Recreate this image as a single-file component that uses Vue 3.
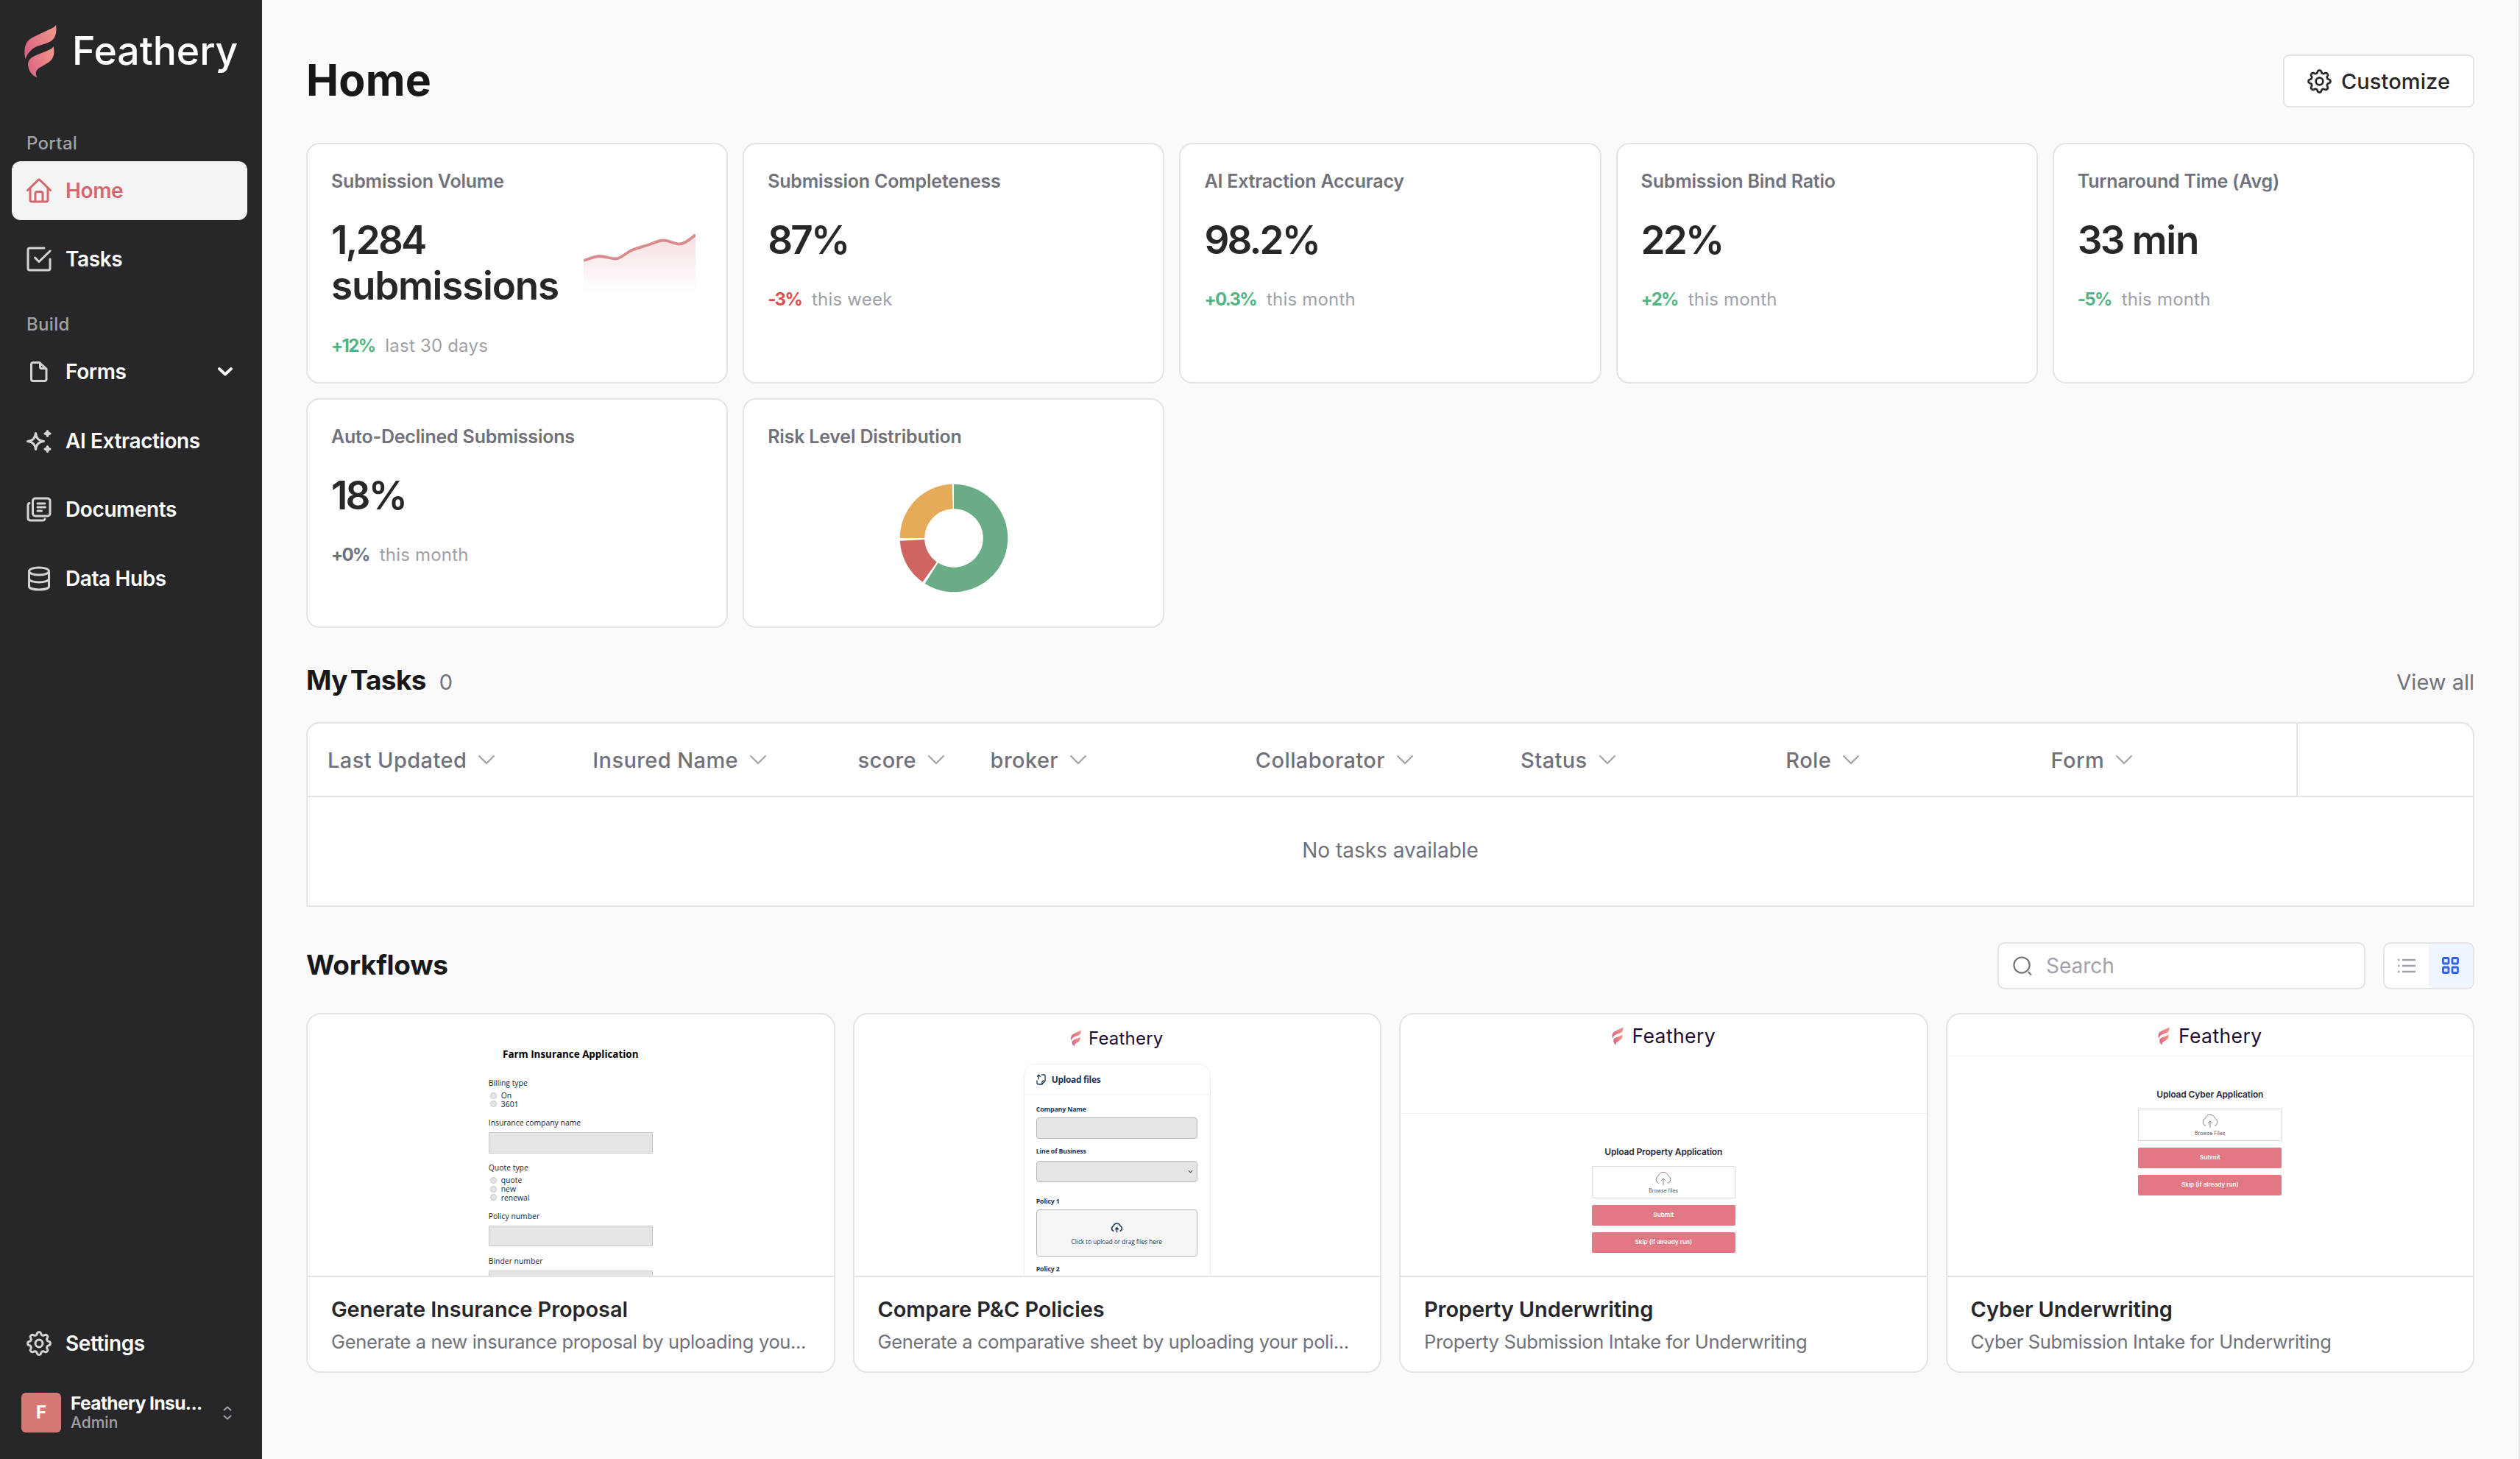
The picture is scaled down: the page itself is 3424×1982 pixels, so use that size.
<template>
  <div class="app">
    <!-- shared icon shapes -->
    <svg class="sprite" width="0" height="0" aria-hidden="true">
      <defs>
        <linearGradient id="feather-grad" x1="0" y1="0.6" x2="1" y2="0.3">
          <stop offset="0" stop-color="#dc6785" />
          <stop offset="1" stop-color="#f0958a" />
        </linearGradient>
        <linearGradient id="spark-grad" x1="0" y1="0" x2="0" y2="1">
          <stop offset="0" stop-color="#d77d7d" stop-opacity="0.24" />
          <stop offset="1" stop-color="#d77d7d" stop-opacity="0" />
        </linearGradient>
      </defs>
      <symbol id="i-feather" viewBox="0 0 44 72">
        <path fill="url(#feather-grad)" d="M43 0C41 3 38 4.5 34 6L14 15.500C6 19 1 24 .5 34C.2 39 .6 43 1.500 46C4 39 9 33 17 29L31 24.500C40 21.500 45 15 43 0Z" />
        <path fill="url(#feather-grad)" d="M39.700 29C38 32 35 33.500 31 35L15 41.500C8 44.500 5 48.500 5 54C6 63 10 68 17.500 71.500C15 66 15 62 20 58.500C23 56.500 27 54.500 30 52.500C39 48 42 41 39.700 29Z" />
      </symbol>
      <symbol id="i-home" viewBox="0 0 34 34">
        <path d="M1.500 16.500 15.600 2.800a2 2 0 0 1 2.800 0L32.500 16.500M5 13.500V29.500A2.500 2.500 0 0 0 7.500 32H26.500A2.500 2.500 0 0 0 29 29.500V13.500M12 32V21A2.500 2.500 0 0 1 14.500 18.500H19.500A2.500 2.500 0 0 1 22 21V32" />
      </symbol>
      <symbol id="i-tasks" viewBox="0 0 34 34">
        <path d="M24 2H4.500A2.500 2.500 0 0 0 2 4.500V29.500A2.500 2.500 0 0 0 4.500 32H29.500A2.500 2.500 0 0 0 32 29.500V17M11.500 15 17 20.500 32 6" />
      </symbol>
      <symbol id="i-file" viewBox="0 0 34 34">
        <path d="M17.500 4.500H9A2.500 2.500 0 0 0 6.500 7V27A2.500 2.500 0 0 0 9 29.500H24.500A2.500 2.500 0 0 0 27 27V13ZM18.500 5V11A1.500 1.500 0 0 0 20 12.500H26.500" />
      </symbol>
      <symbol id="i-sparkle" viewBox="0 0 34 34">
        <path d="M12.500 6.500C13.600 13.500 16 16.500 23.500 17.600C16 18.700 13.600 21.500 12.500 28.500C11.400 21.500 9 18.700 1.500 17.600C9 16.500 11.400 13.500 12.500 6.500Z" />
        <path d="M28.500 3.500Q28.900 6.600 32 7Q28.900 7.400 28.500 10.500Q28.100 7.400 25 7Q28.100 6.600 28.500 3.500ZM28.500 24.500Q28.900 27.600 32 28Q28.900 28.400 28.500 31.500Q28.100 28.400 25 28Q28.100 27.600 28.500 24.500Z" />
      </symbol>
      <symbol id="i-docs" viewBox="0 0 34 34">
        <rect x="8.500" y="2" width="23.500" height="24" rx="3.500" />
        <path d="M4 8.500Q2 9 2 11.500V28.500Q2 32 5.500 32H22Q24.500 32 25 30M15 9H25M15 14H25.500M15 19H20.500" />
      </symbol>
      <symbol id="i-db" viewBox="0 0 34 34">
        <ellipse cx="17" cy="7" rx="13.500" ry="5" />
        <path d="M3.500 7V27.500C3.500 30.300 9.500 32 17 32S30.500 30.300 30.500 27.500V7M3.500 17.500C3.500 20 9.500 22 17 22S30.500 20 30.500 17.500" />
      </symbol>
      <symbol id="i-gear" viewBox="0 0 34 34">
        <path :d="gearPath" />
        <circle cx="17" cy="17" r="5" />
      </symbol>
      <symbol id="i-cloud" viewBox="0 0 24 20">
        <path d="M6 16.500A5.500 5.500 0 0 1 5.500 6.200A6.800 6.800 0 0 1 18.500 6.200A5.500 5.500 0 0 1 18 16.500M12 19V10M8.800 13 12 9.800 15.200 13" />
      </symbol>
    </svg>

    <aside class="sidebar">
      <div class="brand">
        <svg class="brand-mark"><use href="#i-feather" /></svg>
        <span class="brand-name">Feathery</span>
      </div>

      <nav v-for="group in nav" :key="group.label" class="nav-group">
        <p class="nav-label">{{ group.label }}</p>
        <div class="nav-items">
          <a v-for="item in group.items" :key="item.text" class="nav-item" :class="{ active: item.active }">
            <svg class="nav-icon"><use :href="'#i-' + item.icon" /></svg>
            <span>{{ item.text }}</span>
            <svg v-if="item.expandable" class="nav-chevron" viewBox="0 0 20 12"><path d="M2 2 10 9.500 18 2" /></svg>
          </a>
        </div>
      </nav>

      <div class="sidebar-foot">
        <a class="nav-item">
          <svg class="nav-icon"><use href="#i-gear" /></svg>
          <span>Settings</span>
        </a>
        <div class="account">
          <div class="avatar">F</div>
          <div class="account-text">
            <strong>Feathery Insu...</strong>
            <small>Admin</small>
          </div>
          <svg class="account-toggle" viewBox="0 0 12 19"><path d="M1 6 6 1.500 11 6M1 13 6 17.500 11 13" /></svg>
        </div>
      </div>
    </aside>

    <main class="main">
      <header class="page-head">
        <h1>Home</h1>
        <button class="customize">
          <svg class="customize-icon"><use href="#i-gear" /></svg>
          Customize
        </button>
      </header>

      <section class="metrics">
        <article v-for="m in metrics" :key="m.title" class="metric">
          <h3>{{ m.title }}</h3>
          <div class="metric-row">
            <p class="metric-value"><span class="digits">{{ m.value }}</span>{{ m.unit ? ' ' + m.unit : '' }}</p>
            <svg v-if="m.spark" class="spark" viewBox="0 0 152 80">
              <path :d="sparkLine + 'L152 80L0 80Z'" fill="url(#spark-grad)" />
              <path :d="sparkLine" class="spark-line" />
            </svg>
          </div>
          <p class="metric-trend"><b :class="m.tone">{{ m.delta }}</b><span>{{ m.period }}</span></p>
        </article>
        <article class="metric">
          <h3>Risk Level Distribution</h3>
          <svg class="donut" viewBox="-74 -74 148 148">
            <path v-for="s in slices" :key="s.color" :d="slicePath(s)" :fill="s.color" />
          </svg>
        </article>
      </section>

      <div class="section-head tasks-head">
        <h2>My Tasks<span class="count">0</span></h2>
        <a class="view-all">View all</a>
      </div>
      <section class="table">
        <div class="table-head">
          <div v-for="col in columns" :key="col" class="th">
            {{ col }}
            <svg class="th-chevron" viewBox="0 0 24 14"><path d="M1.500 1.500 12 12 22.500 1.500" /></svg>
          </div>
          <div class="th th-last"></div>
        </div>
        <div class="table-empty">No tasks available</div>
      </section>

      <div class="section-head flows-head">
        <h2>Workflows</h2>
        <div class="tools">
          <div class="search">
            <svg viewBox="0 0 28 28"><circle cx="12.500" cy="12.500" r="11" /><path d="M21.500 22 26 26.500" /></svg>
            <span>Search</span>
          </div>
          <div class="view-toggle">
            <div class="view-btn">
              <svg class="list-icon" viewBox="0 0 24 20"><path d="M0 2H2.500M6 2H24M0 10H2.500M6 10H24M0 18H2.500M6 18H24" /></svg>
            </div>
            <div class="view-btn on">
              <svg class="grid-icon" viewBox="0 0 24 24">
                <rect x="1.500" y="1.500" width="7.500" height="7.500" rx="1" /><rect x="14" y="1.500" width="7.500" height="7.500" rx="1" />
                <rect x="1.500" y="14" width="7.500" height="7.500" rx="1" /><rect x="14" y="14" width="7.500" height="7.500" rx="1" />
              </svg>
            </div>
          </div>
        </div>
      </div>

      <section class="flows">
        <article v-for="flow in flows" :key="flow.title" class="flow">
          <div class="preview">
            <div v-if="flow.kind === 'farm'" class="farm">
              <h4>Farm Insurance Application</h4>
              <div v-for="(f, i) in farmFields" :key="f.label" class="farm-field" :class="{ first: i === 0 }">
                <label>{{ f.label }}</label>
                <div v-if="f.options" class="farm-options">
                  <div v-for="o in f.options" :key="o" class="farm-option"><i></i>{{ o }}</div>
                </div>
                <div v-else class="farm-input"></div>
              </div>
            </div>

            <div v-else-if="flow.kind === 'compare'" class="compare">
              <div class="mini-brand small"><svg><use href="#i-feather" /></svg><span>Feathery</span></div>
              <div class="panel">
                <div class="panel-head">
                  <svg viewBox="0 0 14 16"><path d="M7.500 1H11.500Q13 1 13 2.500V10L8.500 15H4Q1 15 1 12.500V9M13 10H10Q8.500 10 8.500 11.500V15M3.500 8V1.500M1 3.800 3.500 1.200 6 3.800" /></svg>
                  <span>Upload files</span>
                </div>
                <div class="panel-body">
                  <label>Company Name</label>
                  <div class="panel-input"></div>
                  <label class="lob">Line of Business</label>
                  <div class="panel-input select"><svg viewBox="0 0 8 5"><path d="M1 1 4 4 7 1" /></svg></div>
                  <label class="policy">Policy 1</label>
                  <div class="dropzone">
                    <svg><use href="#i-cloud" /></svg>
                    <span>Click to upload or drag files here</span>
                  </div>
                  <label class="policy-next">Policy 2</label>
                </div>
              </div>
            </div>

            <div v-else class="upload">
              <div class="upload-head" :class="flow.kind">
                <div class="mini-brand"><svg><use href="#i-feather" /></svg><span>Feathery</span></div>
              </div>
              <div class="upload-body">
                <h4>{{ flow.heading }}</h4>
                <div class="browse"><svg><use href="#i-cloud" /></svg><span>{{ flow.browse }}</span></div>
                <div class="pink-btn">Submit</div>
                <div class="pink-btn">Skip (if already run)</div>
              </div>
            </div>
          </div>
          <div class="flow-text">
            <h3>{{ flow.title }}</h3>
            <p>{{ flow.text }}</p>
          </div>
        </article>
      </section>
    </main>
  </div>
</template>

<script setup>
const nav = [
  {
    label: 'Portal',
    items: [
      { text: 'Home', icon: 'home', active: true },
      { text: 'Tasks', icon: 'tasks' }
    ]
  },
  {
    label: 'Build',
    items: [
      { text: 'Forms', icon: 'file', expandable: true },
      { text: 'AI Extractions', icon: 'sparkle' },
      { text: 'Documents', icon: 'docs' },
      { text: 'Data Hubs', icon: 'db' }
    ]
  }
]

const metrics = [
  { title: 'Submission Volume', value: '1,284', unit: 'submissions', delta: '+12%', period: 'last 30 days', tone: 'up', spark: true },
  { title: 'Submission Completeness', value: '87%', delta: '-3%', period: 'this week', tone: 'down' },
  { title: 'AI Extraction Accuracy', value: '98.2%', delta: '+0.3%', period: 'this month', tone: 'up' },
  { title: 'Submission Bind Ratio', value: '22%', delta: '+2%', period: 'this month', tone: 'up' },
  { title: 'Turnaround Time (Avg)', value: '33', unit: 'min', delta: '-5%', period: 'this month', tone: 'up' },
  { title: 'Auto-Declined Submissions', value: '18%', delta: '+0%', period: 'this month', tone: 'flat' }
]

const slices = [
  { from: 0, to: 212.5, color: '#69ac86' },
  { from: 215.5, to: 267, color: '#cf6560' },
  { from: 270, to: 358.2, color: '#e5ab58' }
]

const columns = ['Last Updated', 'Insured Name', 'score', 'broker', 'Collaborator', 'Status', 'Role', 'Form']

const farmFields = [
  { label: 'Billing type', options: ['On', '3601'] },
  { label: 'Insurance company name' },
  { label: 'Quote type', options: ['quote', 'new', 'renewal'] },
  { label: 'Policy number' },
  { label: 'Binder number' }
]

const flows = [
  { kind: 'farm', title: 'Generate Insurance Proposal', text: 'Generate a new insurance proposal by uploading you...' },
  { kind: 'compare', title: 'Compare P&C Policies', text: 'Generate a comparative sheet by uploading your poli...' },
  { kind: 'property', title: 'Property Underwriting', text: 'Property Submission Intake for Underwriting', heading: 'Upload Property Application', browse: 'Browse files' },
  { kind: 'cyber', title: 'Cyber Underwriting', text: 'Cyber Submission Intake for Underwriting', heading: 'Upload Cyber Application', browse: 'Browse Files' }
]

// monotone curve through the eight volume samples
const samples = [37, 31, 34.5, 23, 16, 9.5, 14.5, 2]
const step = 152 / (samples.length - 1)

function slope(i) {
  const before = samples[i] - samples[i - 1]
  const after = samples[i + 1] - samples[i]
  if (i === 0) return after
  if (i === samples.length - 1) return before * 1.3
  return before * after <= 0 ? 0 : (before + after) / 2
}

const sparkLine = samples.reduce((d, y, i) => {
  if (i === 0) return `M0 ${y}`
  const x = i * step
  const c1 = samples[i - 1] + slope(i - 1) / 3
  const c2 = y - slope(i) / 3
  return `${d}C${x - (step * 2) / 3} ${c1} ${x - step / 3} ${c2} ${x} ${y}`
}, '')

function point(r, deg) {
  const a = (deg * Math.PI) / 180
  return `${(r * Math.sin(a)).toFixed(2)} ${(-r * Math.cos(a)).toFixed(2)}`
}

function slicePath({ from, to }) {
  const R = 73.3
  const r = 39.8
  const large = to - from > 180 ? 1 : 0
  return `M${point(R, from)}A${R} ${R} 0 ${large} 1 ${point(R, to)}L${point(r, to)}A${r} ${r} 0 ${large} 0 ${point(r, from)}Z`
}

// eight-tooth cog outline
function gear() {
  const pts = []
  for (let i = 0; i < 160; i++) {
    const t = (i / 160) * Math.PI * 2
    const r = 13.6 + 1.9 * Math.tanh(1.6 * Math.cos(8 * t))
    pts.push(`${(17 + r * Math.sin(t)).toFixed(2)} ${(17 - r * Math.cos(t)).toFixed(2)}`)
  }
  return `M${pts.join('L')}Z`
}
const gearPath = gear()
</script>

<style>
body {
  background: #fafafa;
}
</style>

<style scoped>
.app {
  display: flex;
  width: 3424px;
  height: 1982px;
  overflow: hidden;
  background: #fafafa;
  font-family: Inter, 'Liberation Sans', sans-serif;
  color: #27272a;
}
.app * {
  box-sizing: border-box;
}
.sprite {
  position: absolute;
}
h1, h2, h3, h4, p {
  margin: 0;
}
svg {
  display: block;
  flex: none;
}

/* sidebar */
.sidebar {
  width: 356px;
  flex: none;
  display: flex;
  flex-direction: column;
  padding: 34px 20px 36px 16px;
  background: #272729;
}
.brand {
  display: flex;
  align-items: center;
  gap: 21px;
  height: 72px;
  padding-left: 17px;
  margin-bottom: 41px;
}
.brand-mark {
  width: 44px;
  height: 72px;
}
.brand-name {
  padding-bottom: 2px;
  font-size: 53.500px;
  font-weight: 500;
  letter-spacing: -0.1px;
  color: #fff;
  line-height: 70px;
}
.nav-group {
  padding-top: 33px;
}
.nav-group + .nav-group {
  padding-top: 34px;
}
.nav-label {
  padding-left: 20px;
  margin-bottom: 9px;
  font-size: 24px;
  font-weight: 500;
  line-height: 30px;
  letter-spacing: 0.3px;
  color: #a1a1aa;
}
.nav-items {
  display: flex;
  flex-direction: column;
  gap: 13.400px;
}
.nav-item {
  display: flex;
  align-items: center;
  height: 80px;
  padding: 0 20px;
  gap: 19px;
  border-radius: 12px;
  font-size: 28px;
  font-weight: 600;
  letter-spacing: -0.4px;
  color: #fff;
}
.nav-item.active {
  background: #f4f4f4;
  color: #d4686f;
}
.nav-icon {
  width: 34px;
  height: 34px;
  fill: none;
  stroke: #d4d4d8;
  stroke-width: 3;
  stroke-linecap: round;
  stroke-linejoin: round;
}
.active .nav-icon {
  stroke: #d4686f;
}
.nav-chevron {
  width: 20px;
  height: 12px;
  margin-left: auto;
  fill: none;
  stroke: #fff;
  stroke-width: 3.800;
  stroke-linecap: round;
  stroke-linejoin: round;
}
.sidebar-foot {
  margin-top: auto;
}
.account {
  display: flex;
  align-items: center;
  height: 54px;
  margin-top: 27px;
  padding-left: 13px;
}
.avatar {
  width: 54px;
  height: 54px;
  border-radius: 6px;
  background: #d67876;
  color: #fff;
  font-size: 24px;
  font-weight: 700;
  line-height: 53px;
  text-align: center;
}
.account-text {
  margin-left: 13px;
  display: flex;
  flex-direction: column;
}
.account-text strong {
  font-size: 24.500px;
  font-weight: 700;
  line-height: 28px;
  letter-spacing: -0.6px;
  color: #fff;
}
.account-text small {
  font-size: 21px;
  font-weight: 500;
  line-height: 26px;
  color: #a1a1aa;
}
.account-toggle {
  width: 12px;
  height: 19px;
  margin-left: auto;
  margin-right: 21px;
  fill: none;
  stroke: #a1a1aa;
  stroke-width: 2;
}

/* page */
.main {
  flex: 1;
  min-width: 0;
  padding: 74px 60px 0;
  border-right: 2px solid #e4e4e4;
}
.page-head {
  display: flex;
  justify-content: space-between;
  align-items: center;
  height: 72px;
  margin-bottom: 48px;
}
h1 {
  padding: 0 0 3px 0;
  font-size: 59px;
  font-weight: 700;
  line-height: 68px;
  letter-spacing: 0.2px;
  color: #18181b;
}
.customize {
  display: flex;
  align-items: center;
  justify-content: center;
  gap: 13px;
  width: 260px;
  height: 72px;
  padding: 0;
  border: 2px solid #e4e4e4;
  border-radius: 8px;
  background: #fff;
  font-family: inherit;
  font-size: 29px;
  font-weight: 500;
  letter-spacing: 0.1px;
  color: #27272a;
}
.customize-icon {
  width: 33px;
  height: 33px;
  fill: none;
  stroke: #27272a;
  stroke-width: 2.800;
}

/* metrics */
.metrics {
  display: grid;
  grid-template-columns: repeat(5, 1fr);
  grid-template-rows: 327px 312px;
  gap: 20px;
}
.metric {
  padding: 34px 32px 0;
  border: 2px solid #e4e4e4;
  border-radius: 18px;
  background: #fff;
}
.metric h3 {
  font-size: 25px;
  font-weight: 600;
  line-height: 32px;
  letter-spacing: -0.2px;
  color: #71717a;
}
.metric-row {
  display: flex;
  justify-content: space-between;
  align-items: center;
  margin: 33px 0 34px;
}
.metric-value {
  max-width: 320px;
  font-size: 53px;
  font-weight: 600;
  line-height: 62.400px;
  letter-spacing: -1.200px;
  color: #27272a;
}
.digits {
  letter-spacing: -2.800px;
}
.spark {
  width: 152px;
  height: 80px;
  margin-right: 10px;
}
.spark-line {
  fill: none;
  stroke: #d98b8d;
  stroke-width: 3.800;
}
.metric-trend {
  display: flex;
  gap: 14px;
  font-size: 24px;
  line-height: 32px;
  letter-spacing: 0.2px;
  color: #9f9fa9;
}
.metric-trend b {
  font-weight: 700;
  letter-spacing: -1.700px;
}
.up {
  color: #50b584;
}
.down {
  color: #de4b4b;
}
.flat {
  color: #6b7280;
}
.donut {
  width: 148px;
  height: 148px;
  margin: 48px auto 0;
}

/* sections */
.section-head {
  display: flex;
  justify-content: space-between;
}
h2 {
  font-size: 37px;
  font-weight: 700;
  line-height: 46px;
  letter-spacing: -0.3px;
  color: #18181b;
}
.tasks-head {
  align-items: baseline;
  height: 46px;
  margin: 48px 0 34px;
}
.tasks-head h2 {
  letter-spacing: -0.7px;
  word-spacing: -4px;
}
.count {
  margin-left: 18px;
  font-size: 29px;
  font-weight: 400;
  color: #71717a;
}
.view-all {
  font-size: 29px;
  font-weight: 400;
  color: #71717a;
}
.table {
  border: 2px solid #e4e4e4;
  border-radius: 18px 18px 0 0;
  background: #fff;
  color: #71717a;
  font-size: 28px;
}
.table-head {
  display: grid;
  grid-template-columns: 12fr 12fr 6fr 12fr 12fr 12fr 12fr 12fr 8fr;
  height: 100px;
  border-bottom: 2px solid #e4e4e4;
}
.th {
  display: flex;
  align-items: center;
  gap: 15px;
  min-width: 0;
  padding-left: 27px;
  font-size: 29px;
  font-weight: 500;
  letter-spacing: 0.4px;
  white-space: nowrap;
}
.th-last {
  border-left: 2px solid #e4e4e4;
}
.th-chevron {
  width: 24px;
  height: 14px;
  fill: none;
  stroke: #a1a1aa;
  stroke-width: 2.200;
}
.table-empty {
  height: 147px;
  line-height: 144px;
  text-align: center;
}
.flows-head {
  align-items: center;
  height: 64px;
  margin: 48px 0 32px;
}
.flows-head h2 {
  padding-bottom: 3px;
}
.tools {
  display: flex;
  gap: 24px;
}
.search {
  display: flex;
  align-items: center;
  gap: 18px;
  width: 500px;
  height: 64px;
  padding-left: 19px;
  border: 2px solid #e4e4e4;
  border-radius: 10px;
  background: #fff;
  font-size: 28px;
  color: #a1a1aa;
}
.search svg {
  width: 27px;
  height: 27px;
  fill: none;
  stroke: #71717a;
  stroke-width: 2.200;
}
.view-toggle {
  display: flex;
  width: 124px;
  height: 64px;
  border: 2px solid #e4e4e4;
  border-radius: 10px;
  overflow: hidden;
  background: #fff;
}
.view-btn {
  flex: 1;
  display: flex;
  align-items: center;
  justify-content: center;
}
.view-btn.on {
  background: #eff5ff;
}
.list-icon {
  width: 24px;
  height: 20px;
  stroke: #a1a1aa;
  stroke-width: 2.600;
}
.grid-icon {
  width: 24px;
  height: 24px;
  fill: none;
  stroke: #3463e0;
  stroke-width: 2.800;
}

/* workflow cards */
.flows {
  display: grid;
  grid-template-columns: repeat(4, 1fr);
  gap: 24px;
}
.flow {
  height: 489px;
  border: 2px solid #e4e4e4;
  border-radius: 20px;
  background: #fff;
  overflow: hidden;
}
.preview {
  height: 357px;
  overflow: hidden;
  border-bottom: 2px solid #e4e4e4;
}
.flow-text {
  padding: 24px 32px 0;
}
.flow-text h3 {
  font-size: 29px;
  font-weight: 600;
  line-height: 40px;
  letter-spacing: -0.100px;
  color: #27272a;
}
.flow-text p {
  margin-top: 6px;
  font-size: 25.500px;
  line-height: 36px;
  letter-spacing: -0.350px;
  white-space: nowrap;
  color: #71717a;
}

/* farm form preview */
.farm {
  width: 223px;
  margin: 0 auto;
  padding-top: 45px;
  font-family: 'Open Sans', sans-serif;
  font-size: 10.400px;
  color: #222;
}
.farm h4 {
  margin-bottom: 24px;
  font-size: 13.400px;
  font-weight: 700;
  line-height: 18px;
  text-align: center;
  white-space: nowrap;
  color: #000;
}
.farm-field {
  margin-top: 13.500px;
}
.farm-field.first {
  margin-top: 0;
}
.farm-field label {
  display: block;
  line-height: 12px;
}
.farm-options {
  margin-top: 5.500px;
}
.farm-option {
  display: flex;
  align-items: center;
  gap: 6px;
  height: 11.600px;
  padding-left: 2px;
}
.farm-option i {
  width: 9px;
  height: 9px;
  border: 1px solid #c4c4c4;
  border-radius: 50%;
  background: #e5e5e5;
}
.farm-input {
  height: 28.500px;
  margin-top: 7px;
  border: 1px solid #c8c8c8;
  border-radius: 1px;
  background: #e5e5e5;
}

/* brand inside previews */
.mini-brand {
  display: flex;
  align-items: center;
  justify-content: center;
  gap: 12px;
  height: 25px;
  font-size: 26.500px;
  line-height: 25px;
  letter-spacing: 0.4px;
  color: #1f0a33;
}
.mini-brand svg {
  width: 16px;
  height: 25px;
}
.mini-brand.small {
  gap: 10px;
  height: 23px;
  font-size: 24px;
  line-height: 23px;
  letter-spacing: 0.2px;
}
.mini-brand.small svg {
  width: 14px;
  height: 23px;
}

/* policy comparison preview */
.compare {
  padding-top: 21px;
  font-family: Inter, sans-serif;
}
.panel {
  width: 254px;
  height: 330px;
  margin: 23px auto 0;
  border: 1px solid #ececf2;
  border-radius: 16px;
  font-family: 'Open Sans', sans-serif;
  color: #1b3656;
}
.panel-head {
  display: flex;
  align-items: center;
  gap: 8px;
  height: 42px;
  padding-left: 16px;
  border-bottom: 2px solid #f6f6fa;
  font-size: 12px;
  font-weight: 700;
  letter-spacing: -0.350px;
}
.panel-head svg {
  width: 13px;
  height: 15px;
  fill: none;
  stroke: #1b3656;
  stroke-width: 1.400;
}
.panel-body {
  padding: 13px 17px 0 16px;
}
.panel-body label {
  display: block;
  font-size: 8.900px;
  font-weight: 700;
  line-height: 12px;
  letter-spacing: -0.2px;
}
.panel-body .lob {
  margin-top: 11px;
  margin-bottom: 7px;
}
.panel-body .policy {
  margin-top: 20px;
}
.panel-body .policy-next {
  margin-top: 11px;
}
.panel-input {
  display: flex;
  align-items: center;
  justify-content: flex-end;
  height: 29px;
  margin-top: 5px;
  padding-right: 5px;
  border: 1px solid #b8b8b8;
  border-radius: 4px;
  background: #e5e5e5;
}
.panel-input svg {
  width: 7px;
  height: 5px;
  fill: none;
  stroke: #3d4a5c;
  stroke-width: 1.300;
}
.dropzone {
  display: flex;
  flex-direction: column;
  align-items: center;
  height: 64px;
  margin-top: 5px;
  padding-top: 17px;
  border: 1px solid #b4b4b4;
  border-radius: 4px;
  background: #f5f5f5;
  font-size: 8.200px;
  line-height: 12px;
}
.dropzone svg {
  width: 17px;
  height: 14px;
  margin-bottom: 6px;
  fill: none;
  stroke: #1b3656;
  stroke-width: 2.200;
}

/* upload previews */
.upload-head {
  padding-top: 17px;
  border-bottom: 1px solid #f3f3f3;
}
.upload-head.property {
  height: 135px;
}
.upload-head.cyber {
  height: 57px;
}
.upload-body {
  width: 195px;
  margin: 0 auto;
  padding-top: 44px;
  display: flex;
  flex-direction: column;
  gap: 9px;
  text-align: center;
}
.upload-body h4 {
  margin: 0 -20px 2px;
  font-size: 12px;
  font-weight: 600;
  line-height: 16px;
  letter-spacing: -0.150px;
  color: #1f2937;
}
.browse {
  display: flex;
  flex-direction: column;
  align-items: center;
  height: 44px;
  padding-top: 6px;
  border: 1px solid #d3d9e5;
  border-radius: 2px;
  font-size: 6.900px;
  line-height: 10px;
  color: #4b5563;
}
.browse svg {
  width: 24px;
  height: 20px;
  margin-bottom: 2px;
  fill: none;
  stroke: #777;
  stroke-width: 0.900;
}
.pink-btn {
  height: 28px;
  border-radius: 2px;
  background: #e27884;
  color: #fff;
  font-size: 8.200px;
  font-weight: 600;
  line-height: 27px;
}
</style>
